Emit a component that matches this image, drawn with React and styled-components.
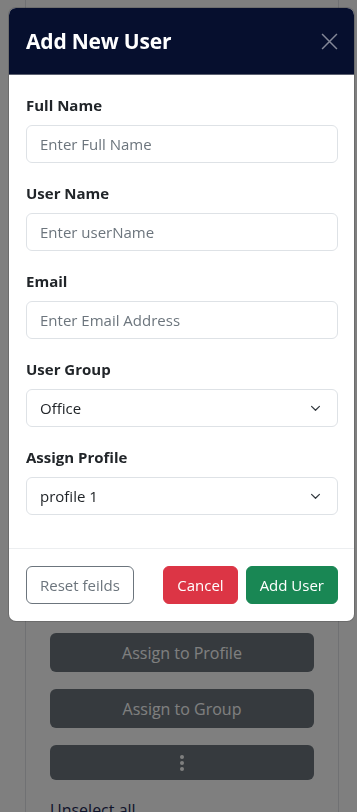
import React from 'react';
import styled, { createGlobalStyle } from 'styled-components';

const GlobalStyle = createGlobalStyle`
  body {
    margin: 0;
    font-family: "Open Sans", "Noto Sans", Arial, sans-serif;
    background: #fff;
    color: #212529;
  }
  * { box-sizing: border-box; }
`;

const fields = [
  { label: 'Full Name', placeholder: 'Enter Full Name' },
  { label: 'User Name', placeholder: 'Enter userName' },
  { label: 'Email', placeholder: 'Enter Email Address' },
];

const selects = [
  { label: 'User Group', value: 'Office' },
  { label: 'Assign Profile', value: 'profile 1' },
];

const Chevron = () => (
  <svg width="11" height="7" viewBox="0 0 12 8" fill="none">
    <path d="M1.5 1.5 6 6l4.5-4.5" stroke="#343a40" strokeWidth="1.4" strokeLinecap="round" strokeLinejoin="round" />
  </svg>
);

const CloseIcon = () => (
  <svg width="17" height="17" viewBox="0 0 16 16" fill="none">
    <path d="M1 1l14 14M15 1 1 15" stroke="currentColor" strokeWidth="1.4" />
  </svg>
);

const App = () => {
  return (
    <>
      <GlobalStyle />
      <Page>
        <Card>
          <ActionButton>Assign to Profile</ActionButton>
          <ActionButton>Assign to Group</ActionButton>
          <ActionButton $short>
            <Dots><span /><span /><span /></Dots>
          </ActionButton>
          <TextLink>Unselect all</TextLink>
        </Card>
      </Page>
      <Backdrop />
      <Modal>
        <Header>
          <Title>Add New User</Title>
          <CloseButton aria-label="Close"><CloseIcon /></CloseButton>
        </Header>
        <Body>
          {fields.map((f) => (
            <Group key={f.label}>
              <Label>{f.label}</Label>
              <Input type="text" placeholder={f.placeholder} />
            </Group>
          ))}
          {selects.map((s) => (
            <Group key={s.label}>
              <Label>{s.label}</Label>
              <SelectBox>
                <span>{s.value}</span>
                <Chevron />
              </SelectBox>
            </Group>
          ))}
        </Body>
        <Footer>
          <Button $variant="outline">Reset feilds</Button>
          <Spacer />
          <Button $variant="danger">Cancel</Button>
          <Button $variant="success">Add User</Button>
        </Footer>
      </Modal>
    </>
  );
};

export default App;

const Page = styled.div`
  min-height: 812px;
  padding: 0 18px 0 25px;
  overflow: hidden;
`;

const Card = styled.div`
  border: 1px solid #e0e2e6;
  border-top: none;
  padding: 633px 24px 0;
  display: flex;
  flex-direction: column;
  gap: 17px;
`;

const ActionButton = styled.button`
  height: ${(p) => (p.$short ? '35px' : '39px')};
  background: #6c757d;
  color: #fff;
  border: none;
  border-radius: 6px;
  font-family: inherit;
  font-size: 16px;
  display: flex;
  align-items: center;
  justify-content: center;
`;

const Dots = styled.span`
  display: flex;
  flex-direction: column;
  gap: 2px;
  span {
    width: 4px;
    height: 4px;
    border-radius: 50%;
    background: #fff;
  }
`;

const TextLink = styled.a`
  color: #1e2a55;
  font-size: 16px;
  line-height: 20px;
  margin-top: 3px;
`;

const Backdrop = styled.div`
  position: fixed;
  inset: 0;
  background: rgba(0, 0, 0, 0.5);
`;

const Modal = styled.div`
  position: fixed;
  top: 8px;
  left: 9px;
  width: 345px;
  background: #fff;
  border-radius: 7px;
  overflow: hidden;
  box-shadow: 0 0 0 1px rgba(0, 0, 0, 0.15);
`;

const Header = styled.div`
  height: 67px;
  background: #060f2e;
  border-bottom: 1px solid #5b6070;
  display: flex;
  align-items: center;
  justify-content: space-between;
  padding: 0 16px 0 17px;
`;

const Title = styled.h5`
  margin: 0;
  color: #fff;
  font-size: 21px;
  font-weight: 700;
  letter-spacing: -0.2px;
`;

const CloseButton = styled.button`
  background: none;
  border: none;
  padding: 0;
  color: rgba(255, 255, 255, 0.5);
  display: flex;
`;

const Body = styled.div`
  padding: 18px 16px 15px 17px;
`;

const Group = styled.div`
  margin-bottom: 18px;
`;

const Label = styled.label`
  display: block;
  font-size: 15px;
  font-weight: 700;
  line-height: 24px;
  margin-bottom: 8px;
  color: #212529;
`;

const Input = styled.input`
  display: block;
  width: 100%;
  height: 38px;
  padding: 0 13px;
  border: 1px solid #dee2e6;
  border-radius: 6px;
  font-family: inherit;
  font-size: 15px;
  color: #212529;
  &::placeholder {
    color: #6c757d;
  }
`;

const SelectBox = styled.div`
  height: 38px;
  padding: 0 16px 0 13px;
  border: 1px solid #dee2e6;
  border-radius: 6px;
  font-size: 15px;
  color: #212529;
  display: flex;
  align-items: center;
  justify-content: space-between;
`;

const Footer = styled.div`
  border-top: 1px solid #eceef0;
  padding: 17px 16px 17px 17px;
  display: flex;
  align-items: center;
  gap: 8px;
`;

const Spacer = styled.div`
  flex: 1;
`;

const Button = styled.button`
  height: 38px;
  padding: 0 13px;
  border-radius: 6px;
  font-family: inherit;
  font-size: 15px;
  border: 1px solid;
  ${(p) =>
    p.$variant === 'outline' &&
    `background: #fff; color: #6c757d; border-color: #6c757d;`}
  ${(p) =>
    p.$variant === 'danger' &&
    `background: #dc3545; color: #fff; border-color: #dc3545;`}
  ${(p) =>
    p.$variant === 'success' &&
    `background: #198754; color: #fff; border-color: #198754;`}
`;
